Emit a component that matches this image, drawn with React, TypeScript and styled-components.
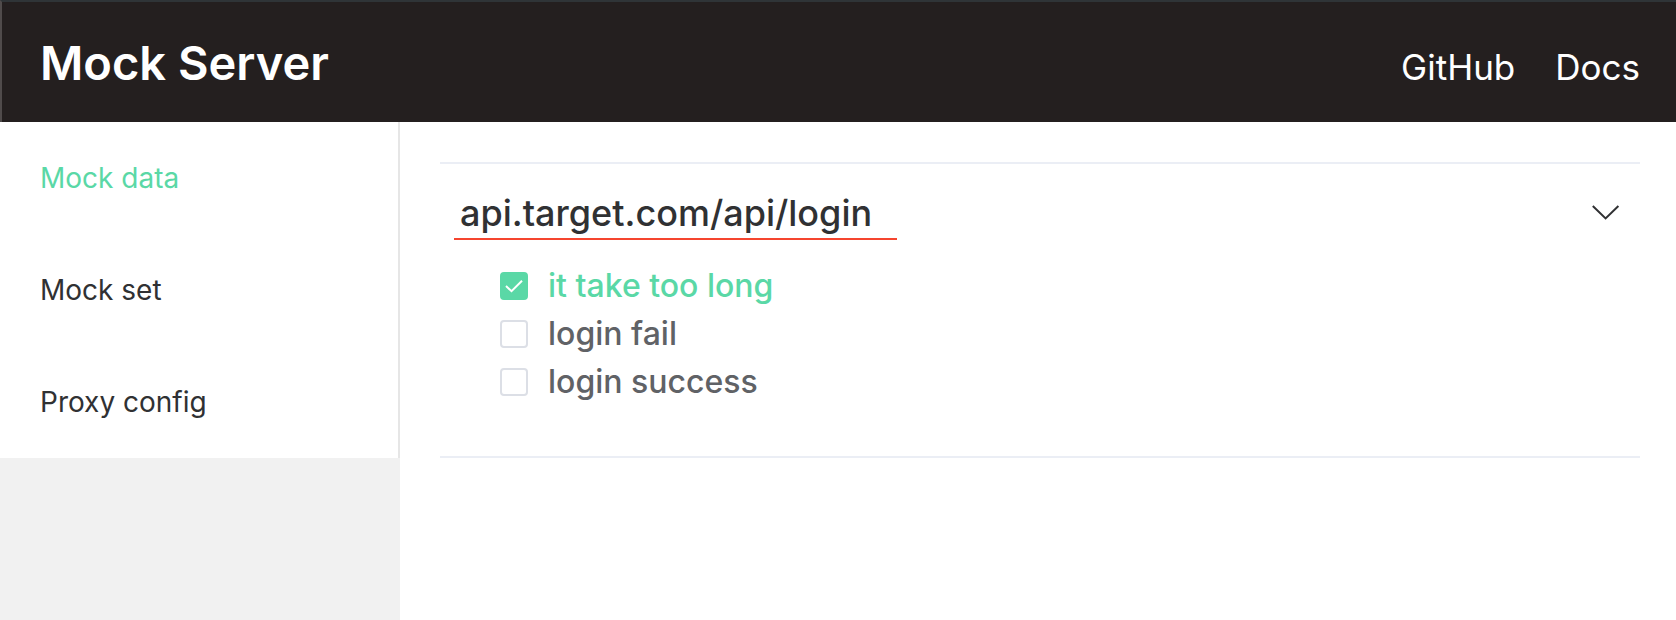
import React, { useState } from "react";
import styled, { createGlobalStyle } from "styled-components";

const GlobalStyle = createGlobalStyle`
  *, *::before, *::after { box-sizing: border-box; }
  html, body, #root { height: 100%; }
  body {
    margin: 0;
    background: #ffffff;
    color: #303133;
    font-family: Inter, "Liberation Sans", sans-serif;
  }
`;

const Page = styled.div`
  display: flex;
  flex-direction: column;
  min-height: 100%;
`;

const Header = styled.header`
  display: flex;
  align-items: center;
  justify-content: space-between;
  padding: 29px 36px 27px 38px;
  border-top: 2px solid #2f3437;
  border-left: 2px solid #504b4b;
  background: #241f1f;
  color: #ffffff;
`;

const Title = styled.h1`
  margin: 0;
  font-size: 47px;
  line-height: 64px;
  font-weight: 600;
`;

const TopNav = styled.nav`
  display: flex;
  gap: 40px;
  padding-top: 8px;
`;

const TopLink = styled.a`
  color: #ffffff;
  font-size: 35px;
  line-height: 48px;
  text-decoration: none;
`;

const Body = styled.div`
  display: flex;
  flex: 1;
`;

const Sidebar = styled.aside`
  flex: 0 0 400px;
  background: #f1f1f1;
`;

const Menu = styled.nav`
  display: flex;
  flex-direction: column;
  border-right: 2px solid #e6e6e6;
  background: #ffffff;
`;

const MenuLink = styled.a<{ $active: boolean }>`
  padding: 0 40px;
  color: ${(p) => (p.$active ? "#5ad8a6" : "#303133")};
  font-size: 28px;
  line-height: 112px;
  text-decoration: none;
`;

const Content = styled.main`
  flex: 1;
  min-width: 0;
  padding: 40px 36px 40px 40px;
`;

const Panel = styled.section`
  border-top: 2px solid #ebeef5;
  border-bottom: 2px solid #ebeef5;
`;

const PanelHeader = styled.button`
  display: flex;
  align-items: flex-start;
  justify-content: space-between;
  width: 100%;
  padding: 25px 20px 16px 14px;
  border: 0;
  background: none;
  color: #303133;
  font: inherit;
  text-align: left;
  cursor: pointer;
`;

const Endpoint = styled.span`
  padding: 0 25px 0 6px;
  border-bottom: 2px solid #f5452f;
  font-size: 36px;
  line-height: 49px;
  font-weight: 500;
`;

const Chevron = styled.svg`
  width: 28px;
  height: 28px;
  margin-top: 8px;
  flex: none;
`;

const Options = styled.ul`
  display: flex;
  flex-direction: column;
  margin: 0;
  padding: 6px 20px 50px 60px;
  list-style: none;
`;

const Option = styled.label<{ $checked: boolean }>`
  display: inline-flex;
  align-items: center;
  gap: 20px;
  color: ${(p) => (p.$checked ? "#5ad8a6" : "#606266")};
  font-size: 32px;
  line-height: 48px;
  font-weight: 500;
  cursor: pointer;
`;

const Tick = styled.span`
  display: grid;
  width: 28px;
  height: 28px;

  > * { grid-area: 1 / 1; }
`;

const Box = styled.input`
  appearance: none;
  width: 28px;
  height: 28px;
  margin: 0;
  border: 2px solid #dcdfe6;
  border-radius: 4px;
  background: #ffffff;

  &:checked {
    border-color: #5ad8a6;
    background: #5ad8a6;
  }
`;

const Mark = styled.svg`
  width: 28px;
  height: 28px;
  pointer-events: none;
`;

const menu = ["Mock data", "Mock set", "Proxy config"];
const options = ["it take too long", "login fail", "login success"];

export default function App() {
  const [page, setPage] = useState(menu[0]);
  const [open, setOpen] = useState(true);
  const [selected, setSelected] = useState(options[0]);

  return (
    <>
      <GlobalStyle />
      <Page>
        <Header>
          <Title>Mock Server</Title>
          <TopNav>
            <TopLink href="#github">GitHub</TopLink>
            <TopLink href="#docs">Docs</TopLink>
          </TopNav>
        </Header>
        <Body>
          <Sidebar>
            <Menu>
              {menu.map((name) => (
                <MenuLink
                  key={name}
                  href="#"
                  $active={name === page}
                  onClick={() => setPage(name)}
                >
                  {name}
                </MenuLink>
              ))}
            </Menu>
          </Sidebar>
          <Content>
            <Panel>
              <PanelHeader aria-expanded={open} onClick={() => setOpen(!open)}>
                <Endpoint>api.target.com/api/login</Endpoint>
                <Chevron viewBox="0 0 28 28" fill="none" stroke="#303133" strokeWidth="2">
                  <path d="M0.8 9 L13.6 21.4 L26.4 9" />
                </Chevron>
              </PanelHeader>
              {open && (
                <Options>
                  {options.map((name) => (
                    <li key={name}>
                      <Option $checked={name === selected}>
                        <Tick>
                          <Box
                            type="checkbox"
                            checked={name === selected}
                            onChange={() => setSelected(name === selected ? "" : name)}
                          />
                          {name === selected && (
                            <Mark viewBox="0 0 28 28" fill="none" stroke="#ffffff" strokeWidth="2">
                              <path d="M6 14 L11.5 19.2 L22 8.8" />
                            </Mark>
                          )}
                        </Tick>
                        {name}
                      </Option>
                    </li>
                  ))}
                </Options>
              )}
            </Panel>
          </Content>
        </Body>
      </Page>
    </>
  );
}
